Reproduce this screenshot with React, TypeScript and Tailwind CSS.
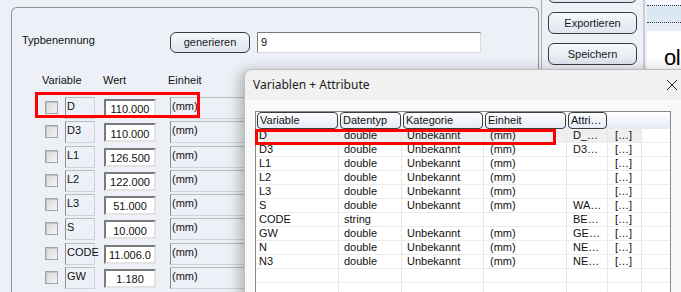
import React from "react";

const leftRows = [
  { v: "D", w: "110.000" },
  { v: "D3", w: "110.000" },
  { v: "L1", w: "126.500" },
  { v: "L2", w: "122.000" },
  { v: "L3", w: "51.000" },
  { v: "S", w: "10.000" },
  { v: "CODE", w: "11.006.0" },
  { v: "GW", w: "1.180" },
];

const tableRows = [
  ["D", "double", "Unbekannt", "(mm)", "D_…", "[…]"],
  ["D3", "double", "Unbekannt", "(mm)", "D3…", "[…]"],
  ["L1", "double", "Unbekannt", "(mm)", "", "[…]"],
  ["L2", "double", "Unbekannt", "(mm)", "", "[…]"],
  ["L3", "double", "Unbekannt", "(mm)", "", "[…]"],
  ["S", "double", "Unbekannt", "(mm)", "WA…", "[…]"],
  ["CODE", "string", "", "", "BE…", "[…]"],
  ["GW", "double", "Unbekannt", "(mm)", "GE…", "[…]"],
  ["N", "double", "Unbekannt", "(mm)", "NE…", "[…]"],
  ["N3", "double", "Unbekannt", "(mm)", "NE…", "[…]"],
  ["", "", "", "", "", ""],
  ["", "", "", "", "", ""],
];

// Spaltenbreiten der Tabelle (px)
const colW = ["w-[83px]", "w-[63px]", "w-[82px]", "w-[83px]", "w-[41px]", "w-[34px]"];
const colPad = ["pl-[3px]", "pl-[5px]", "pl-[5px]", "pl-[6px]", "pl-[6px]", "pl-[7px]"];
const headers = ["Variable", "Datentyp", "Kategorie", "Einheit", "Attri…"];

function WinButton({ label, className }: { label: string; className: string }) {
  return (
    <div
      className={
        "flex items-center justify-center rounded-[6px] border border-[#3a3a3a] bg-gradient-to-b from-[#f5f8fc] to-[#dfe6ef] text-[#1a1a1a] " +
        className
      }
    >
      {label}
    </div>
  );
}

function LeftRow({ v, w }: { v: string; w: string }) {
  return (
    <div className="flex h-[24.3px] items-start">
      <div className="ml-[33px] mt-[4px] h-[13px] w-[13px] border border-[#a3a3a3] bg-gradient-to-br from-[#d9d9d9] to-[#f4f4f4] shadow-[inset_1px_1px_0_#c4c4c4]" />
      <div className="ml-[7px] h-[22px] w-[30px] border border-[#d0d4da] border-l-[#8c8c8c] border-t-[#b9bcc1] pl-[1px] pt-[1px] leading-[14px]">
        {v}
      </div>
      <div className="ml-[9px] mt-[2px] flex h-[19px] w-[52px] items-center justify-center overflow-hidden whitespace-nowrap border-2 border-[#e3e3e3] border-l-[#7a7a7a] border-t-[#7a7a7a] bg-white pt-[2px] text-[#111]">
        {w}
      </div>
      <div className="ml-[14px] h-[22px] w-[120px] border border-[#d0d4da] border-l-[#8c8c8c] border-t-[#b9bcc1] pl-[1px] pt-[1px] leading-[14px]">
        (mm)
      </div>
    </div>
  );
}

export default function App() {
  return (
    <div className="relative h-[292px] w-[681px] overflow-hidden bg-[#edf1f7] font-['Liberation_Sans',Arial,sans-serif] text-[11px] text-[#111]">
      <div className="flex h-full">
        {/* Gruppe Typbenennung */}
        <div className="ml-[11px] mt-[7px] h-[300px] w-[528px] shrink-0 rounded-t-[6px] border border-b-0 border-[#8f9297] pt-[24px]">
          <div className="flex items-start">
            <div className="ml-[10px] mt-[1px] w-[148px] leading-[14px]">Typbenennung</div>
            <WinButton label="generieren" className="h-[21px] w-[80px]" />
            <div className="ml-[7px] flex h-[21px] w-[224px] items-center border border-[#dadada] border-l-[#7c7c7c] border-t-[#7c7c7c] bg-white pl-[3px]">
              9
            </div>
          </div>
          <div className="mt-[20px] flex leading-[14px]">
            <span className="ml-[30px] w-[61px]">Variable</span>
            <span className="w-[65px]">Wert</span>
            <span>Einheit</span>
          </div>
          <div className="mt-[10px] flex flex-col">
            {leftRows.map((r) => (
              <LeftRow key={r.v} v={r.v} w={r.w} />
            ))}
          </div>
        </div>

        <div className="ml-[2px] w-px shrink-0 bg-[#a8abb0]" />

        {/* Schaltflächen */}
        <div className="ml-[6px] flex w-[89px] shrink-0 flex-col gap-[9px]">
          <WinButton label="" className="-mt-[19px] h-[22px] w-[89px]" />
          <WinButton label="Exportieren" className="h-[22px] w-[89px]" />
          <WinButton label="Speichern" className="h-[22px] w-[89px]" />
        </div>

        <div className="ml-[6px] w-[2px] shrink-0 bg-[#c9ccd1]" />

        {/* rechter Bereich */}
        <div className="ml-[2px] flex min-w-0 flex-1 flex-col">
          <div className="h-[5px] bg-[#f4f7fb]" />
          <div className="h-px border-t border-dotted border-[#333]" />
          <div className="h-[16px] bg-[#dce7f4]" />
          <div className="h-px border-t border-dotted border-[#333]" />
          <div className="h-[8px] bg-[#e6edf6]" />
          <div className="flex-1 whitespace-nowrap bg-white pl-[17px] pt-[14px] text-[22px] leading-[26px] tracking-[-0.5px] text-black">
            ol
          </div>
        </div>
      </div>

      {/* roter Rahmen links */}
      <div className="absolute left-[35px] top-[92px] h-[26px] w-[165px] border-[3px] border-[#ff0000]" />

      {/* Dialog Variablen + Attribute */}
      <div className="absolute left-[244px] top-[69px] h-[240px] w-[460px] rounded-tl-[8px] border border-[#bdbdbd] bg-[#f9f9f9] shadow-[-4px_2px_14px_rgba(0,0,0,0.28)]">
        <div className="flex h-[30px] items-center rounded-tl-[8px] bg-[#f1f1f1] pl-[8px] font-['Noto_Sans',sans-serif] text-[12px] text-[#1b1b1b]">
          <span>Variablen + Attribute</span>
          <svg className="ml-[296px]" width="12" height="12" viewBox="0 0 12 12">
            <path d="M1 1 L11 11 M11 1 L1 11" stroke="#222" strokeWidth="1" fill="none" />
          </svg>
        </div>
        <div className="ml-[10px] mt-[11px] w-[416px] border border-[#828790] bg-white">
          <div className="flex h-[17px] bg-gradient-to-b from-[#ffffff] to-[#e3eaf4]">
            {headers.map((h, i) => (
              <div key={h} className={"flex px-px " + colW[i]}>
                <div className="flex h-[17px] flex-1 items-center rounded-[4px] border border-[#3c3c3c] pl-[2px] leading-[13px]">
                  {h}
                </div>
              </div>
            ))}
          </div>
          {tableRows.map((r, ri) => (
            <div
              key={ri}
              className={"flex h-[14px] border-b border-[#ececec] leading-[13px] " + (ri === 0 ? "bg-[#efefef]" : "")}
            >
              {r.map((c, ci) => (
                <div key={ci} className={"whitespace-nowrap border-r border-[#e6e6e6] " + colW[ci] + " " + colPad[ci]}>
                  {c}
                </div>
              ))}
              <div className="flex-1 bg-white" />
            </div>
          ))}
        </div>
      </div>

      {/* roter Rahmen Dialog */}
      <div className="absolute left-[255px] top-[129px] h-[16px] w-[301px] border-[3px] border-[#ff0000]" />
    </div>
  );
}
